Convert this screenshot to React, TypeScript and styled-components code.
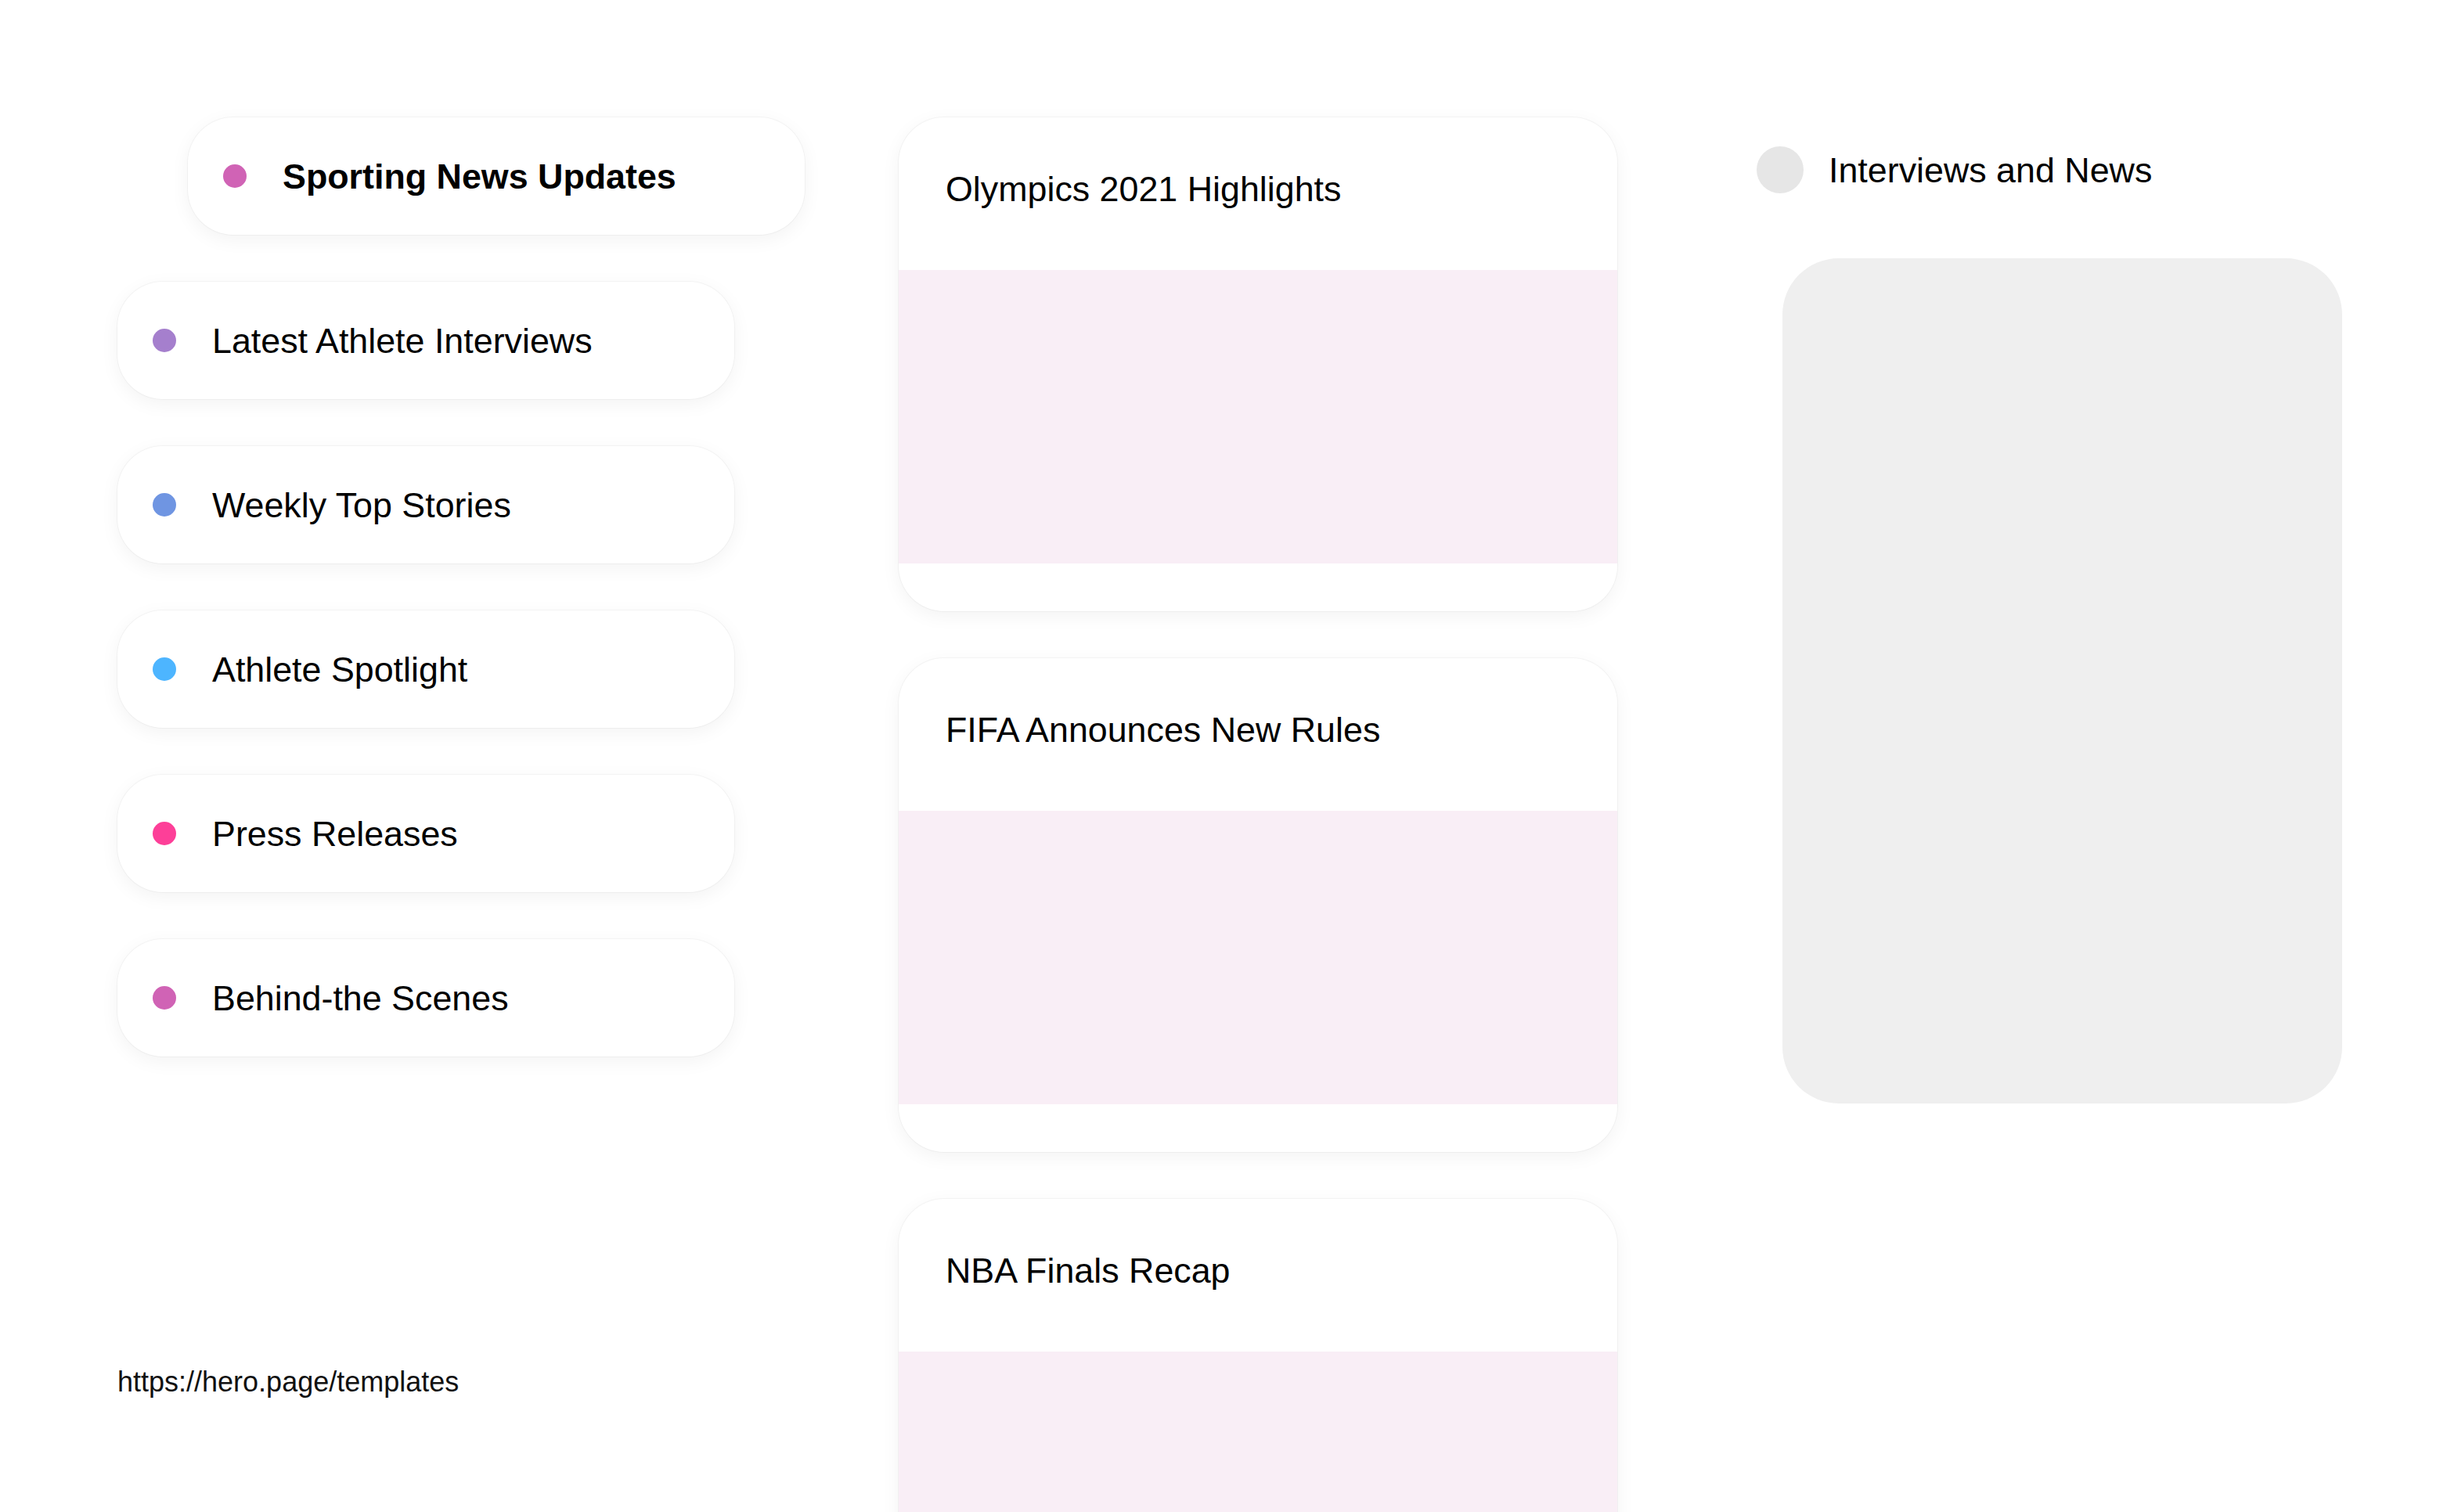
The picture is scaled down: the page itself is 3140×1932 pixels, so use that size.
import styled, { createGlobalStyle } from 'styled-components';

const GlobalStyle = createGlobalStyle`
  html, body {
    margin: 0;
    padding: 0;
    background: #fff;
  }
  body {
    font-family: 'Liberation Sans', Arial, sans-serif;
    color: #000;
  }
`;

type Topic = {
  label: string;
  color: string;
  active?: boolean;
};

const topics: Topic[] = [
  { label: 'Sporting News Updates', color: '#d063b5', active: true },
  { label: 'Latest Athlete Interviews', color: '#a57fcd' },
  { label: 'Weekly Top Stories', color: '#6f95e2' },
  { label: 'Athlete Spotlight', color: '#4db5ff' },
  { label: 'Press Releases', color: '#fd3f98' },
  { label: 'Behind-the Scenes', color: '#d063b5' },
];

const stories = ['Olympics 2021 Highlights', 'FIFA Announces New Rules', 'NBA Finals Recap'];

export default function App() {
  return (
    <>
      <GlobalStyle />
      <SPage>
        <SSideColumn>
          {topics.map((t) => (
            <STopicPill key={t.label} active={t.active}>
              <SDot color={t.color} />
              <STopicLabel active={t.active}>{t.label}</STopicLabel>
            </STopicPill>
          ))}
          <SFooterLink>https://hero.page/templates</SFooterLink>
        </SSideColumn>

        <SFeedColumn>
          {stories.map((s) => (
            <SStoryCard key={s}>
              <SStoryHeader>
                <SStoryTitle>{s}</SStoryTitle>
              </SStoryHeader>
              <SStoryMedia />
              <SStoryFooter />
            </SStoryCard>
          ))}
        </SFeedColumn>

        <SAsideColumn>
          <SAsideHeader>
            <SAvatar />
            <SAsideTitle>Interviews and News</SAsideTitle>
          </SAsideHeader>
          <SAsidePanel />
        </SAsideColumn>
      </SPage>
    </>
  );
}

const SPage = styled.div`
  display: grid;
  grid-template-columns: 876px 918px 748px;
  column-gap: 122px;
  align-items: start;
  padding: 150px 0 0 150px;
  height: 1932px;
  box-sizing: border-box;
  overflow: hidden;
`;

const SSideColumn = styled.div`
  display: flex;
  flex-direction: column;
  align-items: flex-start;
  gap: 60px;
`;

const STopicPill = styled.div<{ active?: boolean }>`
  display: flex;
  align-items: center;
  box-sizing: border-box;
  width: 788px;
  height: 150px;
  margin-left: ${(p) => (p.active ? '90px' : '0')};
  padding-left: 45px;
  border-radius: 58px;
  background: #fff;
  box-shadow: 0 6px 24px rgba(0, 0, 0, 0.05), 0 0 0 1px rgba(0, 0, 0, 0.035);
`;

const SDot = styled.span<{ color: string }>`
  flex: none;
  width: 30px;
  height: 30px;
  border-radius: 50%;
  background: ${(p) => p.color};
  margin-right: 46px;
`;

const STopicLabel = styled.span<{ active?: boolean }>`
  font-size: 44.8px;
  font-weight: ${(p) => (p.active ? 700 : 400)};
  white-space: nowrap;
`;

const SFooterLink = styled.div`
  margin-top: 335px;
  font-size: 36px;
  color: #111;
`;

const SFeedColumn = styled.div`
  display: flex;
  flex-direction: column;
  gap: 60px;
`;

const SStoryCard = styled.div`
  display: flex;
  flex-direction: column;
  height: 631px;
  border-radius: 58px;
  background: #fff;
  overflow: hidden;
  box-shadow: 0 6px 24px rgba(0, 0, 0, 0.05), 0 0 0 1px rgba(0, 0, 0, 0.035);
`;

const SStoryHeader = styled.div`
  height: 195px;
  box-sizing: border-box;
  padding: 66px 60px 0;
`;

const SStoryTitle = styled.h3`
  margin: 0;
  font-size: 44.8px;
  font-weight: 400;
`;

const SStoryMedia = styled.div`
  height: 375px;
  background: #f9eef6;
`;

const SStoryFooter = styled.div`
  flex: 1;
`;

const SAsideColumn = styled.div`
  display: flex;
  flex-direction: column;
  padding-top: 37px;
  margin-left: 56px;
`;

const SAsideHeader = styled.div`
  display: flex;
  align-items: center;
  gap: 32px;
`;

const SAvatar = styled.span`
  width: 60px;
  height: 60px;
  border-radius: 50%;
  background: #e6e6e6;
`;

const SAsideTitle = styled.span`
  font-size: 44.8px;
`;

const SAsidePanel = styled.div`
  margin: 83px 0 0 33px;
  width: 715px;
  height: 1080px;
  border-radius: 72px;
  background: #efefef;
`;
